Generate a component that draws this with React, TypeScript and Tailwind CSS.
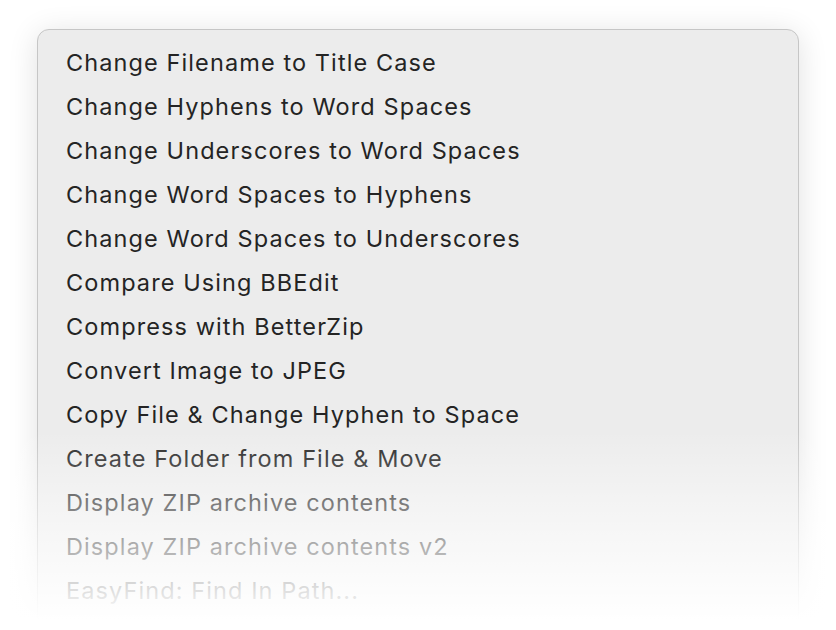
const items = [
  "Change Filename to Title Case",
  "Change Hyphens to Word Spaces",
  "Change Underscores to Word Spaces",
  "Change Word Spaces to Hyphens",
  "Change Word Spaces to Underscores",
  "Compare Using BBEdit",
  "Compress with BetterZip",
  "Convert Image to JPEG",
  "Copy File & Change Hyphen to Space",
  "Create Folder from File & Move",
  "Display ZIP archive contents",
  "Display ZIP archive contents v2",
  "EasyFind: Find In Path...",
  "EasyFind: Search Here...",
];

export default function App() {
  return (
    <div className="relative h-[630px] w-[836px] overflow-hidden bg-white font-['Inter',sans-serif]">
      <div className="pl-[37px] pr-[37px] pt-[29px]">
        <div className="rounded-[12px] border border-[#c6c6c6] bg-[#ececec] pt-[11px] shadow-[0_4px_30px_rgba(0,0,0,0.12)]">
          {items.map((item) => (
            <div
              key={item}
              className="flex h-[44px] items-center pl-[28px] text-[23.5px] tracking-[1.1px] text-[#242424]"
            >
              {item}
            </div>
          ))}
        </div>
      </div>
      <div className="pointer-events-none absolute left-0 right-0 top-[430px] h-[200px] bg-gradient-to-b from-white/0 via-white/60 via-55% to-white to-95%" />
    </div>
  );
}
